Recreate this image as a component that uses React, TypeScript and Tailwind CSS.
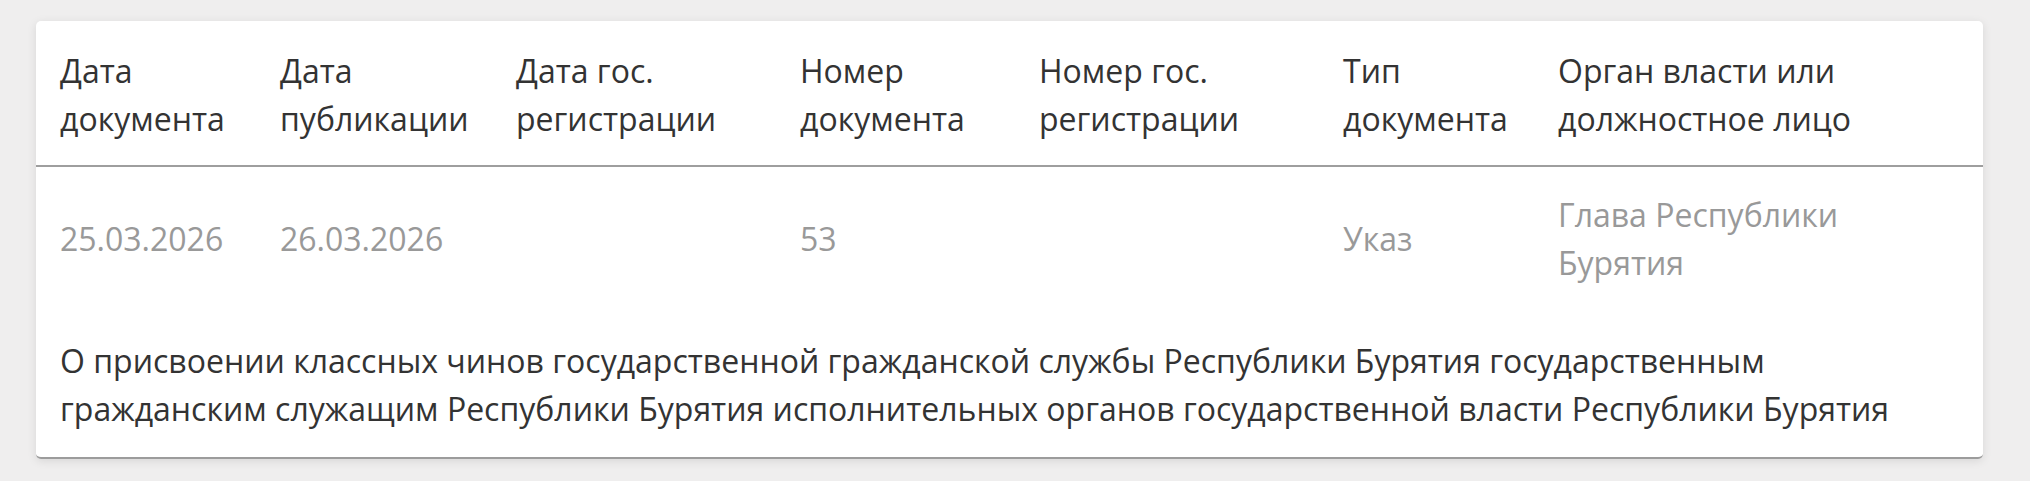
import React from "react";

const headers: string[][] = [
  ["Дата", "документа"],
  ["Дата", "публикации"],
  ["Дата гос.", "регистрации"],
  ["Номер", "документа"],
  ["Номер гос.", "регистрации"],
  ["Тип", "документа"],
  ["Орган власти или", "должностное лицо"],
];

const values: string[][] = [
  ["25.03.2026"],
  ["26.03.2026"],
  [],
  ["53"],
  [],
  ["Указ"],
  ["Глава Республики", "Бурятия"],
];

const grid = "grid grid-cols-[220px_236px_284px_239px_304px_215px_340px]";

export default function App() {
  return (
    <div
      className="min-h-[481px] w-full bg-[#efeeee] pl-[36px] pr-[47px] pt-[21px] pb-[25px] text-[32px] leading-[48px]"
      style={{ fontFamily: '"Open Sans", "Noto Sans", sans-serif' }}
    >
      <div className="rounded-[5px] bg-white shadow-[0_2px_10px_rgba(0,0,0,0.10)] border-b-2 border-[#9c9c9c]">
        <div className={`${grid} border-b-2 border-[#9e9e9e] pl-[24px] pt-[26px] pb-[22px] text-[#333333]`}>
          {headers.map((h, i) => (
            <div key={i} className="flex flex-col">
              {h.map((l) => (
                <span key={l} className="whitespace-nowrap">{l}</span>
              ))}
            </div>
          ))}
        </div>
        <div className={`${grid} items-center pl-[24px] pt-[24px] pb-[24px] text-[#999999]`}>
          {values.map((v, i) => (
            <div key={i} className="flex flex-col">
              {v.map((l) => (
                <span key={l} className="whitespace-nowrap">{l}</span>
              ))}
            </div>
          ))}
        </div>
        <div className="px-[24px] pt-[26px] pb-[24px] text-[#333333]">
          <p className="max-w-[1870px]">
            О присвоении классных чинов государственной гражданской службы Республики Бурятия государственным
            гражданским служащим Республики Бурятия исполнительных органов государственной власти Республики Бурятия
          </p>
        </div>
      </div>
    </div>
  );
}
